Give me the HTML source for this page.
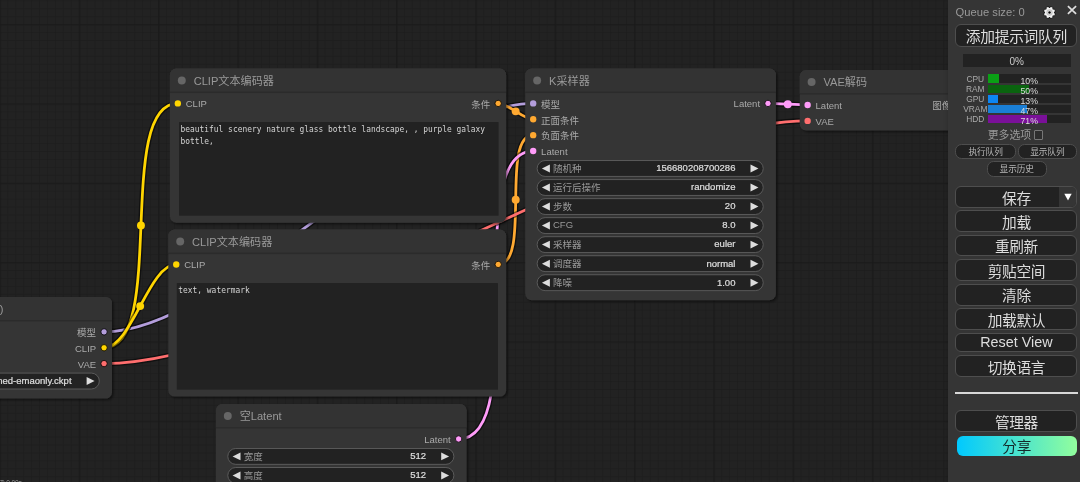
<!DOCTYPE html>
<html lang="zh-CN">
<head>
<meta charset="utf-8">
<title>ComfyUI</title>
<style>
html,body{margin:0;padding:0;background:#202020;overflow:hidden;}
body{width:1080px;height:482px;position:relative;font-family:"Liberation Sans", "Noto Sans CJK SC", sans-serif;}
#root{position:absolute;left:0;top:0;width:1080px;height:482px;overflow:hidden;will-change:transform;}
#canvas{position:absolute;left:0;top:0;width:1080px;height:482px;display:block;}
#canvas text{font-family:"Liberation Sans", "Noto Sans CJK SC", sans-serif;}
#canvas text.mono{font-family:"DejaVu Sans Mono", "Liberation Mono", "Noto Sans CJK SC", monospace;}
#canvas text.t{stroke:none;}
#canvas text.v{stroke:#ddd;stroke-width:0.3px;}
#info{position:absolute;left:0;top:479.8px;font-size:6.6px;line-height:1;color:#999;white-space:nowrap;letter-spacing:-0.2px;}
/* ---- menu ---- */
#menu{position:absolute;left:948px;top:0;width:140px;height:490px;background:#353535;color:#999;
  box-shadow:2px 2px 6px rgba(0,0,0,.4);font-family:"Liberation Sans", "Noto Sans CJK SC", sans-serif;}
#menu .abs{position:absolute;box-sizing:border-box;}
#menu .btn{position:absolute;box-sizing:border-box;left:7.3px;width:122.2px;padding-bottom:0;letter-spacing:-0.35px;background:#222;color:#ddd;
  border:1px solid #4e4e4e;border-radius:6px;text-align:center;font-size:14.7px;white-space:nowrap;
  display:flex;align-items:center;justify-content:center;}
#menu .sm{font-size:8.7px;letter-spacing:-0.1px;padding-bottom:0;border-radius:6.5px;color:#b8b8b8;}

#menu .mon{left:0;width:132px;height:8.6px;}
#menu .mon .lab{position:absolute;left:7.3px;width:40px;text-align:center;top:-1.6px;font-size:8.4px;line-height:12px;color:#aaa;white-space:nowrap;}
#menu .mon .bar{position:absolute;left:39.7px;width:83px;top:0;height:8.5px;background:#222;display:block;}
#menu .mon .bar i{position:absolute;left:0;top:0;height:100%;display:block;}
#menu .mon .bar b{position:absolute;left:0;width:100%;text-align:center;top:0.5px;font-weight:normal;font-size:8.7px;line-height:12px;color:#dcdcdc;}
</style>
</head>
<body>
<div id="root">
<svg id="canvas" width="1080" height="482" viewBox="0 0 1080 482">
<defs>
<pattern id="g2" width="100" height="100" patternUnits="userSpaceOnUse">
<rect width="100" height="100" fill="#222"/>
<path d="M10.5 0V100M20.5 0V100M30.5 0V100M40.5 0V100M50.5 0V100M60.5 0V100M70.5 0V100M80.5 0V100M90.5 0V100M0 10.5H100M0 20.5H100M0 30.5H100M0 40.5H100M0 50.5H100M0 60.5H100M0 70.5H100M0 80.5H100M0 90.5H100" stroke="#191919" stroke-width="1" fill="none"/>
<rect x="0" y="1" width="100" height="1" fill="#1a1a1a"/>
<rect x="1" y="0" width="1" height="100" fill="#151515"/>
<rect x="0" y="0" width="100" height="1" fill="#141414"/>
<rect x="0" y="0" width="1" height="100" fill="#141414"/>
</pattern>
<filter id="sh" x="-5%" y="-5%" width="112%" height="115%">
<feDropShadow dx="2" dy="2" stdDeviation="1.5" flood-color="#000" flood-opacity="0.5"/>
</filter>
</defs>
<g transform="scale(0.7932) translate(-200.8 -69.6)">
<rect x="0" y="-100" width="1600" height="900" fill="#222"/>
<rect x="0" y="-100" width="1600" height="900" fill="url(#g2)" opacity="0.6"/>
<g fill="none" stroke-linecap="butt">
<path d="M332 488C485.22 488 719.78 200 873 200" stroke="rgba(0,0,0,0.5)" stroke-width="7"/>
<path d="M332 488C485.22 488 719.78 200 873 200" stroke="#B39DDB" stroke-width="3.5"/>
<circle cx="602.5" cy="344" r="5" fill="#B39DDB" stroke="none"/>
<path d="M332 508C412.43 508 344.57 200 425 200" stroke="rgba(0,0,0,0.5)" stroke-width="7"/>
<path d="M332 508C412.43 508 344.57 200 425 200" stroke="#FFD500" stroke-width="3.5"/>
<circle cx="378.5" cy="354" r="5" fill="#FFD500" stroke="none"/>
<path d="M332 508C366.74 508 388.26 403 423 403" stroke="rgba(0,0,0,0.5)" stroke-width="7"/>
<path d="M332 508C366.74 508 388.26 403 423 403" stroke="#FFD500" stroke-width="3.5"/>
<circle cx="377.5" cy="455.5" r="5" fill="#FFD500" stroke="none"/>
<path d="M828.85 200C840.97 200 860.88 220 873 220" stroke="rgba(0,0,0,0.5)" stroke-width="7"/>
<path d="M828.85 200C840.97 200 860.88 220 873 220" stroke="#FFA931" stroke-width="3.5"/>
<circle cx="850.92" cy="210" r="5" fill="#FFA931" stroke="none"/>
<path d="M828.9 403C871.12 403 830.78 240 873 240" stroke="rgba(0,0,0,0.5)" stroke-width="7"/>
<path d="M828.9 403C871.12 403 830.78 240 873 240" stroke="#FFA931" stroke-width="3.5"/>
<circle cx="850.95" cy="321.5" r="5" fill="#FFA931" stroke="none"/>
<path d="M779 623C872.74 623 779.26 260 873 260" stroke="rgba(0,0,0,0.5)" stroke-width="7"/>
<path d="M779 623C872.74 623 779.26 260 873 260" stroke="#FF9CF9" stroke-width="3.5"/>
<circle cx="826" cy="441.5" r="5" fill="#FF9CF9" stroke="none"/>
<path d="M1169 200C1181.51 200 1206.49 202 1219 202" stroke="rgba(0,0,0,0.5)" stroke-width="7"/>
<path d="M1169 200C1181.51 200 1206.49 202 1219 202" stroke="#FF9CF9" stroke-width="3.5"/>
<circle cx="1194" cy="201" r="5" fill="#FF9CF9" stroke="none"/>
<path d="M332 528C566.57 528 984.43 222 1219 222" stroke="rgba(0,0,0,0.5)" stroke-width="7"/>
<path d="M332 528C566.57 528 984.43 222 1219 222" stroke="#FF6E6E" stroke-width="3.5"/>
<circle cx="775.5" cy="375" r="5" fill="#FF6E6E" stroke="none"/>
<path d="M1410 202C1422.75 202 1448.25 203 1461 203" stroke="rgba(0,0,0,0.5)" stroke-width="7"/>
<path d="M1410 202C1422.75 202 1448.25 203 1461 203" stroke="#64B5F6" stroke-width="3.5"/>
<circle cx="1435.5" cy="202.5" r="5" fill="#64B5F6" stroke="none"/>
</g>
<g transform="translate(413 389)">
<path d="M8 -30H417.9A8 8 0 0 1 425.9 -22V172.61A8 8 0 0 1 417.9 180.61H8A8 8 0 0 1 0 172.61V-22A8 8 0 0 1 8 -30Z" fill="#353535" filter="url(#sh)"/>
<path d="M8 -30H417.9A8 8 0 0 1 425.9 -22V0H0V-22A8 8 0 0 1 8 -30Z" fill="#333"/>
<rect x="0" y="-1" width="425.9" height="2" fill="rgba(0,0,0,0.14)"/>
<circle cx="15" cy="-15" r="5" fill="#666"/>
<text x="30" y="-9.72" font-size="14" fill="#999" class="t">CLIP文本编码器</text>
<circle cx="10" cy="14" r="4" fill="#FFD500"/>
<text x="20" y="19" font-size="12" fill="#AAA" class="t">CLIP</text>
<circle cx="415.9" cy="14" r="4" fill="#FFA931" stroke="#000" stroke-width="1"/>
<text x="405.9" y="19.35" font-size="12" fill="#AAA" text-anchor="end" class="t">条件</text>
</g>
<g transform="translate(415 186)">
<path d="M8 -30H415.85A8 8 0 0 1 423.85 -22V156.31A8 8 0 0 1 415.85 164.31H8A8 8 0 0 1 0 156.31V-22A8 8 0 0 1 8 -30Z" fill="#353535" filter="url(#sh)"/>
<path d="M8 -30H415.85A8 8 0 0 1 423.85 -22V0H0V-22A8 8 0 0 1 8 -30Z" fill="#333"/>
<rect x="0" y="-1" width="423.85" height="2" fill="rgba(0,0,0,0.14)"/>
<circle cx="15" cy="-15" r="5" fill="#666"/>
<text x="30" y="-9.72" font-size="14" fill="#999" class="t">CLIP文本编码器</text>
<circle cx="10" cy="14" r="4" fill="#FFD500"/>
<text x="20" y="19" font-size="12" fill="#AAA" class="t">CLIP</text>
<circle cx="413.85" cy="14" r="4" fill="#FFA931" stroke="#000" stroke-width="1"/>
<text x="403.85" y="19.35" font-size="12" fill="#AAA" text-anchor="end" class="t">条件</text>
</g>
<g transform="translate(473 609)">
<path d="M8 -30H308A8 8 0 0 1 316 -22V98A8 8 0 0 1 308 106H8A8 8 0 0 1 0 98V-22A8 8 0 0 1 8 -30Z" fill="#353535" filter="url(#sh)"/>
<path d="M8 -30H308A8 8 0 0 1 316 -22V0H0V-22A8 8 0 0 1 8 -30Z" fill="#333"/>
<rect x="0" y="-1" width="316" height="2" fill="rgba(0,0,0,0.14)"/>
<circle cx="15" cy="-15" r="5" fill="#666"/>
<text x="30" y="-9.93" font-size="14" fill="#999" class="t">空Latent</text>
<circle cx="306" cy="14" r="4" fill="#FF9CF9" stroke="#000" stroke-width="1"/>
<text x="296" y="19" font-size="12" fill="#AAA" text-anchor="end" class="t">Latent</text>
<path d="M25 26H290A10 10 0 0 1 300 36V36A10 10 0 0 1 290 46H25A10 10 0 0 1 15 36V36A10 10 0 0 1 25 26Z" fill="#222" stroke="#666" stroke-width="1"/>
<path d="M31 31L21 36L31 41Z" fill="#DDD"/>
<path d="M284 31L294 36L284 41Z" fill="#DDD"/>
<text x="35" y="39.95" font-size="12" fill="#999" class="t">宽度</text>
<text x="265" y="39.6" font-size="12" fill="#DDD" text-anchor="end" class="v">512</text>
<path d="M25 50H290A10 10 0 0 1 300 60V60A10 10 0 0 1 290 70H25A10 10 0 0 1 15 60V60A10 10 0 0 1 25 50Z" fill="#222" stroke="#666" stroke-width="1"/>
<path d="M31 55L21 60L31 65Z" fill="#DDD"/>
<path d="M284 55L294 60L284 65Z" fill="#DDD"/>
<text x="35" y="63.95" font-size="12" fill="#999" class="t">高度</text>
<text x="265" y="63.6" font-size="12" fill="#DDD" text-anchor="end" class="v">512</text>
<path d="M25 74H290A10 10 0 0 1 300 84V84A10 10 0 0 1 290 94H25A10 10 0 0 1 15 84V84A10 10 0 0 1 25 74Z" fill="#222" stroke="#666" stroke-width="1"/>
<path d="M31 79L21 84L31 89Z" fill="#DDD"/>
<path d="M284 79L294 84L284 89Z" fill="#DDD"/>
<text x="35" y="87.95" font-size="12" fill="#999" class="t">批次大小</text>
<text x="265" y="87.6" font-size="12" fill="#DDD" text-anchor="end" class="v">1</text>
</g>
<g transform="translate(863 186)">
<path d="M8 -30H308A8 8 0 0 1 316 -22V254A8 8 0 0 1 308 262H8A8 8 0 0 1 0 254V-22A8 8 0 0 1 8 -30Z" fill="#353535" filter="url(#sh)"/>
<path d="M8 -30H308A8 8 0 0 1 316 -22V0H0V-22A8 8 0 0 1 8 -30Z" fill="#333"/>
<rect x="0" y="-1" width="316" height="2" fill="rgba(0,0,0,0.14)"/>
<circle cx="15" cy="-15" r="5" fill="#666"/>
<text x="30" y="-9.62" font-size="14" fill="#999" class="t">K采样器</text>
<circle cx="10" cy="14" r="4" fill="#B39DDB"/>
<text x="20" y="19.35" font-size="12" fill="#AAA" class="t">模型</text>
<circle cx="10" cy="34" r="4" fill="#FFA931"/>
<text x="20" y="39.35" font-size="12" fill="#AAA" class="t">正面条件</text>
<circle cx="10" cy="54" r="4" fill="#FFA931"/>
<text x="20" y="59.35" font-size="12" fill="#AAA" class="t">负面条件</text>
<circle cx="10" cy="74" r="4" fill="#FF9CF9"/>
<text x="20" y="79" font-size="12" fill="#AAA" class="t">Latent</text>
<circle cx="306" cy="14" r="4" fill="#FF9CF9" stroke="#000" stroke-width="1"/>
<text x="296" y="19" font-size="12" fill="#AAA" text-anchor="end" class="t">Latent</text>
<path d="M25 86H290A10 10 0 0 1 300 96V96A10 10 0 0 1 290 106H25A10 10 0 0 1 15 96V96A10 10 0 0 1 25 86Z" fill="#222" stroke="#666" stroke-width="1"/>
<path d="M31 91L21 96L31 101Z" fill="#DDD"/>
<path d="M284 91L294 96L284 101Z" fill="#DDD"/>
<text x="35" y="99.95" font-size="12" fill="#999" class="t">随机种</text>
<text x="265" y="99.6" font-size="12" fill="#DDD" text-anchor="end" class="v">156680208700286</text>
<path d="M25 110H290A10 10 0 0 1 300 120V120A10 10 0 0 1 290 130H25A10 10 0 0 1 15 120V120A10 10 0 0 1 25 110Z" fill="#222" stroke="#666" stroke-width="1"/>
<path d="M31 115L21 120L31 125Z" fill="#DDD"/>
<path d="M284 115L294 120L284 125Z" fill="#DDD"/>
<text x="35" y="123.95" font-size="12" fill="#999" class="t">运行后操作</text>
<text x="265" y="123.6" font-size="12" fill="#DDD" text-anchor="end" class="v">randomize</text>
<path d="M25 134H290A10 10 0 0 1 300 144V144A10 10 0 0 1 290 154H25A10 10 0 0 1 15 144V144A10 10 0 0 1 25 134Z" fill="#222" stroke="#666" stroke-width="1"/>
<path d="M31 139L21 144L31 149Z" fill="#DDD"/>
<path d="M284 139L294 144L284 149Z" fill="#DDD"/>
<text x="35" y="147.95" font-size="12" fill="#999" class="t">步数</text>
<text x="265" y="147.6" font-size="12" fill="#DDD" text-anchor="end" class="v">20</text>
<path d="M25 158H290A10 10 0 0 1 300 168V168A10 10 0 0 1 290 178H25A10 10 0 0 1 15 168V168A10 10 0 0 1 25 158Z" fill="#222" stroke="#666" stroke-width="1"/>
<path d="M31 163L21 168L31 173Z" fill="#DDD"/>
<path d="M284 163L294 168L284 173Z" fill="#DDD"/>
<text x="35" y="171.6" font-size="12" fill="#999" class="t">CFG</text>
<text x="265" y="171.6" font-size="12" fill="#DDD" text-anchor="end" class="v">8.0</text>
<path d="M25 182H290A10 10 0 0 1 300 192V192A10 10 0 0 1 290 202H25A10 10 0 0 1 15 192V192A10 10 0 0 1 25 182Z" fill="#222" stroke="#666" stroke-width="1"/>
<path d="M31 187L21 192L31 197Z" fill="#DDD"/>
<path d="M284 187L294 192L284 197Z" fill="#DDD"/>
<text x="35" y="195.95" font-size="12" fill="#999" class="t">采样器</text>
<text x="265" y="195.6" font-size="12" fill="#DDD" text-anchor="end" class="v">euler</text>
<path d="M25 206H290A10 10 0 0 1 300 216V216A10 10 0 0 1 290 226H25A10 10 0 0 1 15 216V216A10 10 0 0 1 25 206Z" fill="#222" stroke="#666" stroke-width="1"/>
<path d="M31 211L21 216L31 221Z" fill="#DDD"/>
<path d="M284 211L294 216L284 221Z" fill="#DDD"/>
<text x="35" y="219.95" font-size="12" fill="#999" class="t">调度器</text>
<text x="265" y="219.6" font-size="12" fill="#DDD" text-anchor="end" class="v">normal</text>
<path d="M25 230H290A10 10 0 0 1 300 240V240A10 10 0 0 1 290 250H25A10 10 0 0 1 15 240V240A10 10 0 0 1 25 230Z" fill="#222" stroke="#666" stroke-width="1"/>
<path d="M31 235L21 240L31 245Z" fill="#DDD"/>
<path d="M284 235L294 240L284 245Z" fill="#DDD"/>
<text x="35" y="243.95" font-size="12" fill="#999" class="t">降噪</text>
<text x="265" y="243.6" font-size="12" fill="#DDD" text-anchor="end" class="v">1.00</text>
</g>
<g transform="translate(1209 188)">
<path d="M8 -30H203A8 8 0 0 1 211 -22V38A8 8 0 0 1 203 46H8A8 8 0 0 1 0 38V-22A8 8 0 0 1 8 -30Z" fill="#353535" filter="url(#sh)"/>
<path d="M8 -30H203A8 8 0 0 1 211 -22V0H0V-22A8 8 0 0 1 8 -30Z" fill="#333"/>
<rect x="0" y="-1" width="211" height="2" fill="rgba(0,0,0,0.14)"/>
<circle cx="15" cy="-15" r="5" fill="#666"/>
<text x="30" y="-9.8" font-size="14" fill="#999" class="t">VAE解码</text>
<circle cx="10" cy="14" r="4" fill="#FF9CF9"/>
<text x="20" y="19" font-size="12" fill="#AAA" class="t">Latent</text>
<circle cx="10" cy="34" r="4" fill="#FF6E6E"/>
<text x="20" y="39" font-size="12" fill="#AAA" class="t">VAE</text>
<circle cx="201" cy="14" r="4" fill="#64B5F6" stroke="#000" stroke-width="1"/>
<text x="191" y="19.35" font-size="12" fill="#AAA" text-anchor="end" class="t">图像</text>
</g>
<g transform="translate(1451 189)">
<path d="M8 -30H203A8 8 0 0 1 211 -22V50A8 8 0 0 1 203 58H8A8 8 0 0 1 0 50V-22A8 8 0 0 1 8 -30Z" fill="#353535" filter="url(#sh)"/>
<path d="M8 -30H203A8 8 0 0 1 211 -22V0H0V-22A8 8 0 0 1 8 -30Z" fill="#333"/>
<rect x="0" y="-1" width="211" height="2" fill="rgba(0,0,0,0.14)"/>
<circle cx="15" cy="-15" r="5" fill="#666"/>
<text x="30" y="-9.5" font-size="14" fill="#999" class="t">保存图像</text>
<circle cx="10" cy="14" r="4" fill="#64B5F6"/>
<text x="20" y="19.35" font-size="12" fill="#AAA" class="t">图像</text>
<path d="M25 26H185A10 10 0 0 1 195 36V36A10 10 0 0 1 185 46H25A10 10 0 0 1 15 36V36A10 10 0 0 1 25 26Z" fill="#222" stroke="#666" stroke-width="1"/>
<path d="M31 31L21 36L31 41Z" fill="#DDD"/>
<path d="M179 31L189 36L179 41Z" fill="#DDD"/>
<text x="35" y="39.95" font-size="12" fill="#999" class="t">文件名前缀</text>
<text x="160" y="39.6" font-size="12" fill="#DDD" text-anchor="end" class="v">ComfyUI</text>
</g>
<g transform="translate(26 474)">
<path d="M8 -30H308A8 8 0 0 1 316 -22V90A8 8 0 0 1 308 98H8A8 8 0 0 1 0 90V-22A8 8 0 0 1 8 -30Z" fill="#353535" filter="url(#sh)"/>
<path d="M8 -30H308A8 8 0 0 1 316 -22V0H0V-22A8 8 0 0 1 8 -30Z" fill="#333"/>
<rect x="0" y="-1" width="316" height="2" fill="rgba(0,0,0,0.14)"/>
<circle cx="15" cy="-15" r="5" fill="#666"/>
<text x="30" y="-9.85" font-size="14" fill="#999" class="t">Checkpoint加载器(简易)</text>
<circle cx="306" cy="14" r="4" fill="#B39DDB" stroke="#000" stroke-width="1"/>
<text x="296" y="19.35" font-size="12" fill="#AAA" text-anchor="end" class="t">模型</text>
<circle cx="306" cy="34" r="4" fill="#FFD500" stroke="#000" stroke-width="1"/>
<text x="296" y="39" font-size="12" fill="#AAA" text-anchor="end" class="t">CLIP</text>
<circle cx="306" cy="54" r="4" fill="#FF6E6E" stroke="#000" stroke-width="1"/>
<text x="296" y="59" font-size="12" fill="#AAA" text-anchor="end" class="t">VAE</text>
<path d="M25 66H290A10 10 0 0 1 300 76V76A10 10 0 0 1 290 86H25A10 10 0 0 1 15 76V76A10 10 0 0 1 25 66Z" fill="#222" stroke="#666" stroke-width="1"/>
<path d="M31 71L21 76L31 81Z" fill="#DDD"/>
<path d="M284 71L294 76L284 81Z" fill="#DDD"/>
<text x="35" y="79.66" font-size="12" fill="#999" class="t">Checkpoint名称</text>
<text x="265" y="79.6" font-size="12" fill="#DDD" text-anchor="end" class="v">v1-5-pruned-emaonly.ckpt</text>
</g>
<rect x="423.7" y="426.5" width="404.9" height="134.31" fill="#222"/>
<text transform="translate(425.6 439) scale(1 1.12)" font-size="9.96" fill="#d4d4d4" class="mono" textLength="90" lengthAdjust="spacing" xml:space="preserve">text, watermark</text>
<rect x="426.5" y="223.5" width="402.85" height="118.01" fill="#222"/>
<text transform="translate(428.4 236) scale(1 1.12)" font-size="9.96" fill="#d4d4d4" class="mono" textLength="384" lengthAdjust="spacing" xml:space="preserve">beautiful scenery nature glass bottle landscape, , purple galaxy</text>
<text transform="translate(428.4 250.88) scale(1 1.12)" font-size="9.96" fill="#d4d4d4" class="mono" textLength="42" lengthAdjust="spacing" xml:space="preserve">bottle,</text>
</g>
</svg>
<div id="info">T: 0.00s</div>
<div id="menu">
  <div class="abs" id="qsize" style="left:7.6px;top:6.2px;font-size:11.2px;color:#999;white-space:nowrap;">Queue size: 0</div>
  <svg class="abs" id="gear" style="left:94.1px;top:4.7px;" width="15" height="15" viewBox="-7.5 -7.5 15 15">
    <g fill="#1c1c1c" stroke="#1c1c1c" stroke-width="1.5" stroke-linejoin="round" opacity="0.85" transform="rotate(22.5)">
      <circle r="4.5"/>
      <rect x="-1.15" y="-5.6" width="2.3" height="11.2"/>
      <rect x="-1.15" y="-5.6" width="2.3" height="11.2" transform="rotate(45)"/>
      <rect x="-1.15" y="-5.6" width="2.3" height="11.2" transform="rotate(90)"/>
      <rect x="-1.15" y="-5.6" width="2.3" height="11.2" transform="rotate(135)"/>
    </g>
    <g fill="#f2f2f2" transform="rotate(22.5)">
      <circle r="4.5"/>
      <rect x="-1.15" y="-5.6" width="2.3" height="11.2" rx="0.5"/>
      <rect x="-1.15" y="-5.6" width="2.3" height="11.2" rx="0.5" transform="rotate(45)"/>
      <rect x="-1.15" y="-5.6" width="2.3" height="11.2" rx="0.5" transform="rotate(90)"/>
      <rect x="-1.15" y="-5.6" width="2.3" height="11.2" rx="0.5" transform="rotate(135)"/>
    </g>
    <circle r="2.5" fill="none" stroke="#c6c6c6" stroke-width="1.3"/>
    <circle r="1.25" fill="#050505"/>
  </svg>
  <svg class="abs" id="close" style="left:119.1px;top:5.1px;" width="10" height="10" viewBox="0 0 10 10">
    <path d="M0.9 1.1L9.1 8.9M9.1 1.1L0.9 8.9" stroke="#dedede" stroke-width="1.7" fill="none"/>
  </svg>
  <div class="btn" style="top:24.4px;height:22.4px;font-size:14.75px;letter-spacing:-0.3px;padding-bottom:0.5px;">添加提示词队列</div>

  <div class="abs" id="prog" style="left:14.8px;top:53.8px;width:107.8px;height:13.3px;background:#222;color:#ccc;font-size:10px;text-align:center;line-height:15.4px;">0%</div>

  <div class="abs mon" style="top:74.2px;"><span class="lab">CPU</span><span class="bar"><i style="width:11.7px;background:#0AA015;"></i><b>10%</b></span></div>
  <div class="abs mon" style="top:84.5px;"><span class="lab">RAM</span><span class="bar"><i style="width:41.7px;background:#0A640F;"></i><b>50%</b></span></div>
  <div class="abs mon" style="top:94.8px;"><span class="lab">GPU</span><span class="bar"><i style="width:10.2px;background:#0C86F4;"></i><b>13%</b></span></div>
  <div class="abs mon" style="top:104.8px;"><span class="lab">VRAM</span><span class="bar"><i style="width:38.9px;background:#1A7FD6;"></i><b>47%</b></span></div>
  <div class="abs mon" style="top:114.9px;"><span class="lab">HDD</span><span class="bar"><i style="width:59.2px;background:#7A1099;"></i><b>71%</b></span></div>

  <div class="abs" id="more" style="left:39.7px;top:128.5px;font-size:10.9px;color:#999;white-space:nowrap;line-height:13px;">更多选项</div>
  <div class="abs" id="chk" style="left:85.8px;top:130.2px;width:9.4px;height:9.4px;border:1px solid #777;border-radius:1px;background:#2e2e2e;"></div>

  <div class="btn sm" style="left:7.4px;width:60.4px;top:144.1px;height:15px;">执行队列</div>
  <div class="btn sm" style="left:69.5px;width:59.7px;top:144.1px;height:15px;">显示队列</div>
  <div class="btn sm" style="left:38.6px;width:60.4px;top:161.3px;height:15.4px;">显示历史</div>

  <div class="btn" style="top:186.3px;height:21.4px;">保存
    <span class="abs" style="right:0;top:0;bottom:0;width:17.5px;background:#353535;border-radius:0 5px 5px 0;"></span>
    <svg class="abs" style="right:4.8px;top:6.2px;" width="8" height="8" viewBox="0 0 8 8"><path d="M0.3 0.8H7.7L4 7.4Z" fill="#fff"/></svg>
  </div>
  <div class="btn" style="top:210.4px;height:21.8px;">加载</div>
  <div class="btn" style="top:235px;height:21.4px;">重刷新</div>
  <div class="btn" style="top:259.4px;height:21.8px;">剪贴空间</div>
  <div class="btn" style="top:284.2px;height:21.6px;">清除</div>
  <div class="btn" style="top:308.4px;height:21.8px;">加载默认</div>
  <div class="btn" style="top:333px;height:19.4px;font-size:14.35px;letter-spacing:0;padding-bottom:0.5px;">Reset View</div>
  <div class="btn" style="top:355.4px;height:22px;">切换语言</div>
  <div class="abs" id="hr" style="left:7.3px;top:392.1px;width:122.7px;height:1.9px;background:#d8d8d8;"></div>
  <div class="btn" style="top:410.2px;height:21.8px;">管理器</div>
  <div class="btn" id="share" style="left:8.7px;width:120px;top:435.7px;height:20.2px;border:none;color:#142a2a;background:linear-gradient(90deg,#00C9FF 0%,#92FE9D 100%);">分享</div>
</div>

</div>
</body>
</html>
